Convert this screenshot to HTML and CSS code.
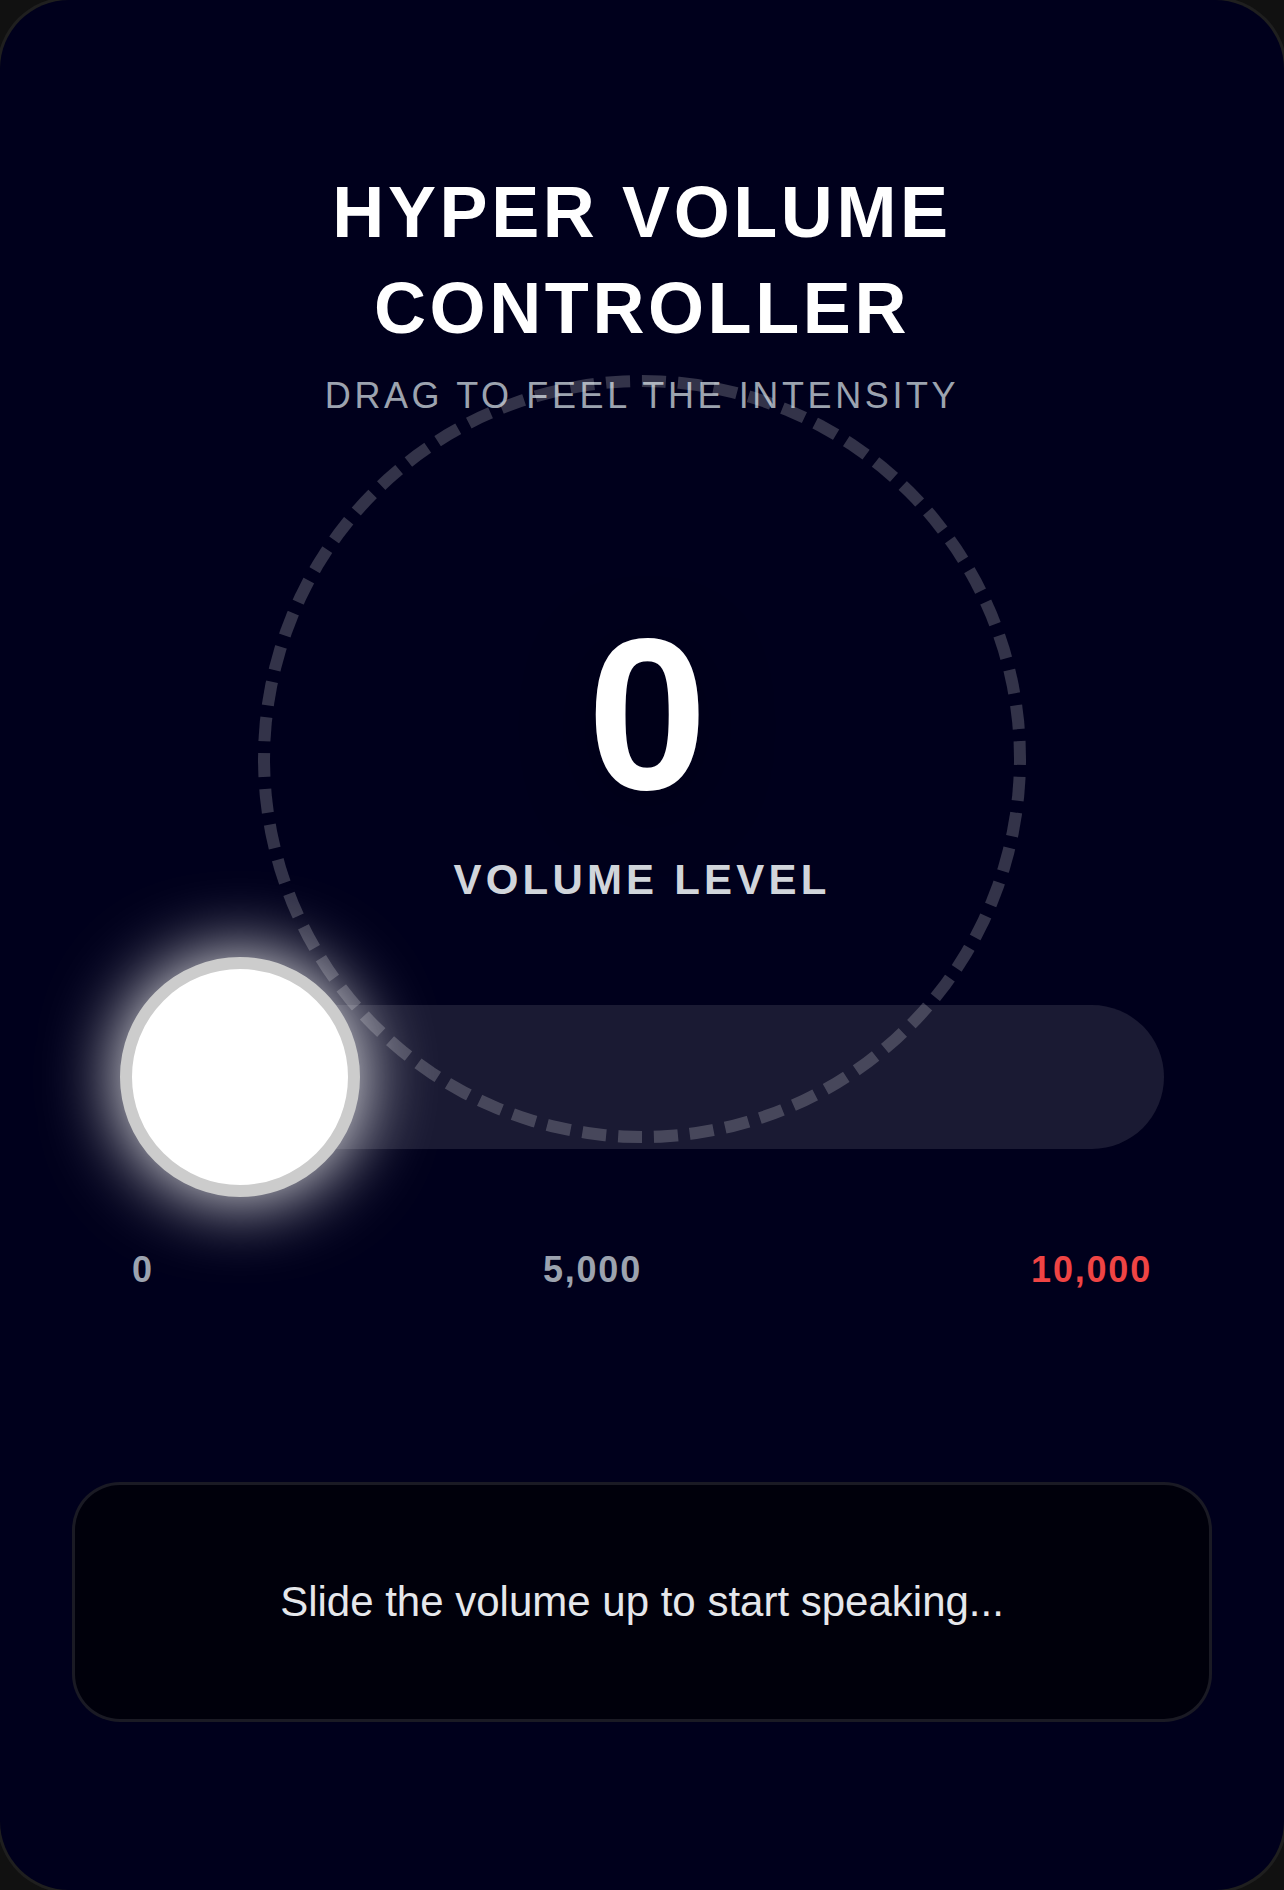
FILE: index.html
```html
<!DOCTYPE html>
<html lang="en">
<head>
<meta charset="utf-8">
<meta name="viewport" content="width=device-width, initial-scale=1">
<title>Hyper Volume Controller</title>
<link rel="stylesheet" href="styles.css">
</head>
<body>
<main class="card">
  <header class="header">
    <h1 class="title">HYPER VOLUME CONTROLLER</h1>
    <p class="subtitle">DRAG TO FEEL THE INTENSITY</p>
  </header>
  <section class="gauge">
    <div class="ring"></div>
    <output class="value" for="volume">0</output>
    <label class="caption" for="volume">VOLUME LEVEL</label>
  </section>
  <section class="control">
    <input class="slider" id="volume" type="range" min="0" max="10000" value="0">
    <div class="scale">
      <span>0</span>
      <span>5,000</span>
      <span class="scale-max">10,000</span>
    </div>
  </section>
  <p class="message">Slide the volume up to start speaking...</p>
</main>
</body>
</html>
```

FILE: styles.css
```css
* {
  box-sizing: border-box;
}

body {
  margin: 0;
  background: #111;
  font-family: "Liberation Sans", Arial, sans-serif;
}

h1,
p {
  margin: 0;
}

.card {
  display: flex;
  flex-direction: column;
  min-height: 100vh;
  padding: 164px 72px;
  border-radius: 69px;
  background: #00001c;
  box-shadow: 0 0 0 3px #1f1f1f;
  overflow: hidden;
}

.header {
  text-align: center;
}

.title {
  color: #fff;
  font-size: 72px;
  line-height: 96px;
  letter-spacing: 0.05em;
}

.subtitle {
  margin-top: 16px;
  color: #9ca3af;
  font-size: 36px;
  line-height: 48px;
  letter-spacing: 0.1em;
}

.gauge {
  position: relative;
  display: flex;
  flex-direction: column;
  align-items: center;
  gap: 28px;
  margin-top: 186px;
  padding-bottom: 2px;
}

.ring {
  position: absolute;
  top: 50%;
  left: 50%;
  width: 768px;
  height: 768px;
  border: 12px dashed rgba(255, 255, 255, 0.2);
  border-radius: 50%;
  transform: translate(-50%, -50%);
  pointer-events: none;
}

.value {
  color: #fff;
  font-size: 216px;
  font-weight: 700;
  line-height: 216px;
  letter-spacing: -0.05em;
  filter: drop-shadow(0 12px 36px rgba(0, 0, 0, 0.3));
}

.caption {
  color: #d1d5db;
  font-size: 42px;
  font-weight: 700;
  line-height: 60px;
  letter-spacing: 0.1em;
}

.control {
  margin-top: 45px;
  padding: 0 48px;
}

.slider {
  display: block;
  width: 100%;
  height: 240px;
  margin: 0;
  background: transparent;
  appearance: none;
  cursor: pointer;
}

.slider::-webkit-slider-runnable-track {
  height: 144px;
  border-radius: 72px;
  background: rgba(255, 255, 255, 0.1);
}

.slider::-webkit-slider-thumb {
  width: 240px;
  height: 240px;
  margin-top: -48px;
  border: 12px solid #ccc;
  border-radius: 50%;
  background: #fff;
  box-shadow: 0 0 75px #fff;
  appearance: none;
}

.scale {
  display: flex;
  justify-content: space-between;
  margin-top: 48px;
  padding: 0 12px;
  color: #9ca3af;
  font-size: 36px;
  font-weight: 700;
  line-height: 50px;
  letter-spacing: 0.05em;
}

.scale-max {
  color: #ef4444;
}

.message {
  display: flex;
  align-items: center;
  justify-content: center;
  min-height: 240px;
  margin-top: 187px;
  padding: 48px;
  border: 3px solid rgba(255, 255, 255, 0.1);
  border-radius: 48px;
  background: rgba(0, 0, 0, 0.6);
  color: #e5e7eb;
  font-size: 42px;
  line-height: 62px;
  text-align: center;
}
```
